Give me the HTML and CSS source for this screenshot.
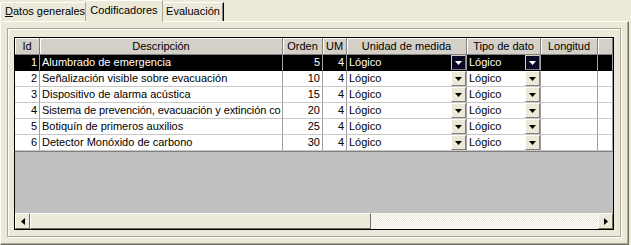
FILE: index.html
```html
<!DOCTYPE html>
<html lang="es">
<head>
  <meta charset="UTF-8">
  <title>Codificadores</title>
  <link rel="stylesheet" href="styles.css">
</head>
<body>
  <div class="tabs">
    <div class="tab tab-first"><u>D</u>atos generales</div>
    <div class="tab tab-active">Codificadores</div>
    <div class="tab tab-last">Evaluación</div>
  </div>

  <div class="panel">
    <div class="frame">
      <div class="grid">
        <div class="row head">
          <div class="cell">Id</div>
          <div class="cell">Descripción</div>
          <div class="cell">Orden</div>
          <div class="cell">UM</div>
          <div class="cell">Unidad de medida</div>
          <div class="cell">Tipo de dato</div>
          <div class="cell">Longitud</div>
          <div class="cell"></div>
        </div>

        <div class="row selected">
          <div class="cell num">1</div>
          <div class="cell">Alumbrado de emergencia</div>
          <div class="cell num">5</div>
          <div class="cell num">4</div>
          <div class="cell combo"><span>Lógico</span><span class="drop"><svg width="7" height="4"><polygon points="0,0 7,0 3.5,4"/></svg></span></div>
          <div class="cell combo"><span>Lógico</span><span class="drop"><svg width="7" height="4"><polygon points="0,0 7,0 3.5,4"/></svg></span></div>
          <div class="cell"></div>
          <div class="cell"></div>
        </div>

        <div class="row">
          <div class="cell num">2</div>
          <div class="cell">Señalización visible sobre evacuación</div>
          <div class="cell num">10</div>
          <div class="cell num">4</div>
          <div class="cell combo"><span>Lógico</span><span class="drop"><svg width="7" height="4"><polygon points="0,0 7,0 3.5,4"/></svg></span></div>
          <div class="cell combo"><span>Lógico</span><span class="drop"><svg width="7" height="4"><polygon points="0,0 7,0 3.5,4"/></svg></span></div>
          <div class="cell"></div>
          <div class="cell"></div>
        </div>

        <div class="row">
          <div class="cell num">3</div>
          <div class="cell">Dispositivo de alarma acústica</div>
          <div class="cell num">15</div>
          <div class="cell num">4</div>
          <div class="cell combo"><span>Lógico</span><span class="drop"><svg width="7" height="4"><polygon points="0,0 7,0 3.5,4"/></svg></span></div>
          <div class="cell combo"><span>Lógico</span><span class="drop"><svg width="7" height="4"><polygon points="0,0 7,0 3.5,4"/></svg></span></div>
          <div class="cell"></div>
          <div class="cell"></div>
        </div>

        <div class="row">
          <div class="cell num">4</div>
          <div class="cell long">Sistema de prevención, evacuación y extinción co</div>
          <div class="cell num">20</div>
          <div class="cell num">4</div>
          <div class="cell combo"><span>Lógico</span><span class="drop"><svg width="7" height="4"><polygon points="0,0 7,0 3.5,4"/></svg></span></div>
          <div class="cell combo"><span>Lógico</span><span class="drop"><svg width="7" height="4"><polygon points="0,0 7,0 3.5,4"/></svg></span></div>
          <div class="cell"></div>
          <div class="cell"></div>
        </div>

        <div class="row">
          <div class="cell num">5</div>
          <div class="cell">Botiquín de primeros auxilios</div>
          <div class="cell num">25</div>
          <div class="cell num">4</div>
          <div class="cell combo"><span>Lógico</span><span class="drop"><svg width="7" height="4"><polygon points="0,0 7,0 3.5,4"/></svg></span></div>
          <div class="cell combo"><span>Lógico</span><span class="drop"><svg width="7" height="4"><polygon points="0,0 7,0 3.5,4"/></svg></span></div>
          <div class="cell"></div>
          <div class="cell"></div>
        </div>

        <div class="row">
          <div class="cell num">6</div>
          <div class="cell">Detector Monóxido de carbono</div>
          <div class="cell num">30</div>
          <div class="cell num">4</div>
          <div class="cell combo"><span>Lógico</span><span class="drop"><svg width="7" height="4"><polygon points="0,0 7,0 3.5,4"/></svg></span></div>
          <div class="cell combo"><span>Lógico</span><span class="drop"><svg width="7" height="4"><polygon points="0,0 7,0 3.5,4"/></svg></span></div>
          <div class="cell"></div>
          <div class="cell"></div>
        </div>

        <div class="filler"></div>

        <div class="hscroll">
          <div class="sbtn"><svg width="4" height="7"><polygon points="4,0 4,7 0,3.5"/></svg></div>
          <div class="thumb"></div>
          <div class="track"></div>
          <div class="sbtn"><svg width="4" height="7"><polygon points="0,0 0,7 4,3.5"/></svg></div>
        </div>
      </div>
    </div>
  </div>
</body>
</html>
```

FILE: styles.css
```css
body {
  background-color: #ece9d8;
  color: #000;
  font-family: "Liberation Sans", Arial, sans-serif;
  font-size: 11px;
  margin: 0;
}

/* tabs */
.tabs {
  display: flex;
  align-items: flex-end;
  height: 21px;
}
.tab {
  box-sizing: border-box;
  height: 19px;
  line-height: 16px;
  text-align: center;
  white-space: nowrap;
  border: 1px solid #fff;
  border-bottom: none;
  border-right-color: #aca899;
}
.tab-first {
  width: 86px;
  text-align: left;
  padding-left: 4px;
}
.tab-active {
  position: relative;
  width: 77px;
  height: 22px;
  margin-bottom: -1px;
  line-height: 18px;
  border-left: none;
  background-color: #ece9d8;
  z-index: 1;
}
.tab-last {
  width: 61px;
  border-left: none;
  border-right: 1px solid #000;
  box-shadow: inset -1px 0 #808080;
}

/* panel + frame */
.panel {
  box-sizing: border-box;
  width: 629px;
  height: 224px;
  padding: 6px 0 0 6px;
  border-top: 1px solid #fff;
  border-left: 1px solid #fff;
  border-right: 1px solid #716f64;
  border-bottom: 1px solid #716f64;
  box-shadow: inset -1px -1px #aca899;
}
.frame {
  box-sizing: border-box;
  width: 614px;
  height: 209px;
  padding: 8px 0 0 6px;
  border: 1px solid #aca899;
  box-shadow: inset 1px 1px #fff, 1px 1px #fff;
}

/* grid */
.grid {
  box-sizing: border-box;
  width: 600px;
  height: 193px;
  border: 1px solid #000;
  background-color: #c0c0c0;
  display: flex;
  flex-direction: column;
}
.row {
  display: grid;
  grid-template-columns: 25px 243px 40px 24px 120px 74px 57px 15px;
  height: 16px;
  background-color: #fff;
}
.cell {
  box-sizing: border-box;
  border-right: 1px solid #a0a0a0;
  border-bottom: 1px solid #c8c8c8;
  padding: 0 2px;
  line-height: 15px;
  white-space: nowrap;
  overflow: hidden;
}
.cell.num {
  text-align: right;
}
.cell.long {
  letter-spacing: -0.1px;
}
.head {
  height: 17px;
}
.head .cell {
  background-color: #d4d0c8;
  border-right: 1px solid #808080;
  border-bottom: 1px solid #808080;
  box-shadow: inset 1px 1px #fff;
  text-align: center;
  line-height: 16px;
}
.selected {
  background-color: #000;
  color: #fff;
}
.selected .cell {
  border-bottom-color: #000;
}

.combo {
  display: flex;
  justify-content: space-between;
  padding-right: 0;
}
.drop {
  box-sizing: border-box;
  width: 15px;
  height: 15px;
  background-color: #ece9d8;
  border: 1px solid;
  border-color: #fff #808080 #808080 #fff;
  display: flex;
  align-items: center;
  justify-content: center;
}
.drop polygon {
  fill: #000;
}
.selected .drop {
  background-color: #0a0a24;
  border-color: #d4d0c8 #808080 #808080 #d4d0c8;
}
.selected .drop polygon {
  fill: #fff;
}

.filler {
  flex: 1;
  border-top: 1px solid #808080;
}

/* scrollbar */
.hscroll {
  display: flex;
  height: 16px;
}
.sbtn, .thumb {
  box-sizing: border-box;
  background-color: #ece9d8;
  border: 1px solid;
  border-color: #fff #716f64 #716f64 #fff;
}
.sbtn {
  width: 15px;
  display: flex;
  align-items: center;
  justify-content: center;
}
.thumb {
  width: 341px;
}
.track {
  flex: 1;
  background: repeating-conic-gradient(#ece9d8 0 25%, #fff 0 50%) 0 0 / 2px 2px;
}
```
